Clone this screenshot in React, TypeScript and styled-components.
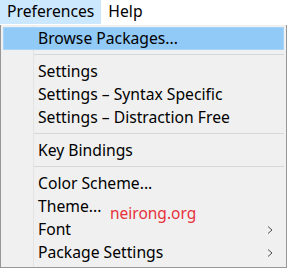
import { ReactElement } from 'react';
import styled, { createGlobalStyle } from 'styled-components';

const GlobalStyle = createGlobalStyle`
  html, body {
    margin: 0;
    padding: 0;
    background: #ffffff;
  }
  body {
    font-family: "Noto Sans", "Open Sans", "Liberation Sans", sans-serif;
    font-size: 15.7px;
    color: #000;
  }
`;

type Entry =
  | { kind: 'item'; label: string; active?: boolean; sub?: boolean }
  | { kind: 'sep' };

const entries: Entry[] = [
  { kind: 'item', label: 'Browse Packages...', active: true },
  { kind: 'sep' },
  { kind: 'item', label: 'Settings' },
  { kind: 'item', label: 'Settings – Syntax Specific' },
  { kind: 'item', label: 'Settings – Distraction Free' },
  { kind: 'sep' },
  { kind: 'item', label: 'Key Bindings' },
  { kind: 'sep' },
  { kind: 'item', label: 'Color Scheme...' },
  { kind: 'item', label: 'Theme...' },
  { kind: 'item', label: 'Font', sub: true },
  { kind: 'item', label: 'Package Settings', sub: true },
];

function App(): ReactElement {
  return (
    <Screen>
      <GlobalStyle />
      <MenuBar>
        <BarItem open>Preferences</BarItem>
        <BarItem>Help</BarItem>
      </MenuBar>
      <Dropdown>
        {entries.map((e, i) =>
          e.kind === 'sep' ? (
            <Separator key={i} />
          ) : (
            <Item key={i} active={e.active}>
              <Label>{e.label}</Label>
              {e.sub && (
                <Arrow viewBox="0 0 8 10">
                  <path d="M2 1.5 L6 5 L2 8.5" fill="none" stroke="#505050" strokeWidth="1" />
                </Arrow>
              )}
            </Item>
          )
        )}
        <Watermark>neirong.org</Watermark>
      </Dropdown>
    </Screen>
  );
}

export default App;

const Screen = styled.div`
  width: 289px;
  height: 268px;
  overflow: hidden;
  background: #ffffff;
`;

const MenuBar = styled.div`
  display: flex;
  height: 25px;
  align-items: stretch;
  background: #ffffff;
`;

const BarItem = styled.div<{ open?: boolean }>`
  display: flex;
  align-items: center;
  padding: 0 6px 0 6px;
  height: 24px;
  box-sizing: border-box;
  background: ${props => (props.open ? '#cce8ff' : 'transparent')};
  border: 1px solid ${props => (props.open ? '#cce8ff' : 'transparent')};
  line-height: 1;
`;

const Dropdown = styled.div`
  position: relative;
  width: 287px;
  height: 243px;
  box-sizing: border-box;
  padding: 2px 2px;
  background: #f0f0f0;
  border: 1px solid #979797;
  border-top: none;
  &::before {
    content: '';
    position: absolute;
    left: 32px;
    top: 0;
    bottom: 0;
    width: 1px;
    background: #e3e3e3;
  }
`;

const Item = styled.div<{ active?: boolean }>`
  position: relative;
  z-index: 1;
  display: flex;
  align-items: center;
  height: 23px;
  box-sizing: border-box;
  padding-left: 34px;
  padding-right: 6px;
  background: ${props => (props.active ? '#91c9f7' : 'transparent')};
  border: 1px solid ${props => (props.active ? '#a8d4f8' : 'transparent')};
`;

const Label = styled.span`
  flex: 1;
  white-space: nowrap;
  line-height: 1;
`;

const Arrow = styled.svg`
  width: 8px;
  height: 10px;
  margin-right: 3px;
`;

const Separator = styled.div`
  position: relative;
  z-index: 1;
  height: 10px;
  margin-left: 31px;
  &::after {
    content: '';
    position: absolute;
    left: 0;
    right: 0;
    top: 4px;
    height: 1px;
    background: #d7d7d7;
  }
`;

const Watermark = styled.span`
  position: absolute;
  z-index: 2;
  left: 109px;
  top: 181px;
  color: #e6323c;
  font-size: 15.5px;
  line-height: 1;
`;
